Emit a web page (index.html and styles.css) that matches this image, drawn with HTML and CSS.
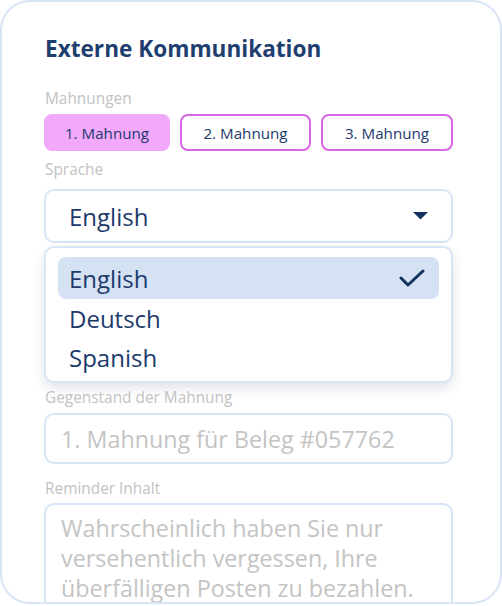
FILE: index.html
```html
<!DOCTYPE html>
<html lang="de">
<head>
<meta charset="utf-8">
<link rel="stylesheet" href="styles.css">
</head>
<body>
<div class="card">
  <h2 class="title">Externe Kommunikation</h2>
  <div class="label label-first">Mahnungen</div>
  <div class="tabs">
    <button class="tab tab-active">1. Mahnung</button>
    <button class="tab">2. Mahnung</button>
    <button class="tab">3. Mahnung</button>
  </div>
  <div class="label label-sprache">Sprache</div>
  <div class="select">
    <span class="select-value">English</span>
    <svg class="caret" width="15" height="8" viewBox="0 0 15 8"><path d="M0 0 H15 L7.5 7.5 Z" fill="#15325f"/></svg>
  </div>
  <div class="menu">
    <div class="option option-selected">
      <span>English</span>
      <svg class="check" width="26" height="20" viewBox="0 0 26 20"><path d="M2 10 L9 17 L24 3" fill="none" stroke="#15325f" stroke-width="3" stroke-linecap="round" stroke-linejoin="round"/></svg>
    </div>
    <div class="option"><span>Deutsch</span></div>
    <div class="option"><span>Spanish</span></div>
  </div>
  <div class="label label-subject">Gegenstand der Mahnung</div>
  <div class="input">1. Mahnung für Beleg #057762</div>
  <div class="label label-body">Reminder Inhalt</div>
  <div class="textarea">Wahrscheinlich haben Sie nur versehentlich vergessen, Ihre überfälligen Posten zu bezahlen.</div>
</div>
</body>
</html>
```
FILE: styles.css
```css
html, body {
  margin: 0;
  padding: 0;
  background: #ffffff;
}
body {
  font-family: "Open Sans", "Noto Sans", sans-serif;
  color: #1c3a6b;
}
.card {
  box-sizing: border-box;
  width: 502px;
  height: 604px;
  border: 2px solid #d8e5f6;
  border-radius: 30px;
  overflow: hidden;
  padding: 30px 47px 0 42px;
  background: #fff;
}
.title {
  margin: 0 0 0 1px;
  font-size: 22.6px;
  line-height: 34px;
  font-weight: 700;
  color: #1f3e70;
}
.label {
  font-size: 15.4px;
  line-height: 20px;
  color: #c2c2c2;
  margin-left: 1px;
}
.label-first {
  margin-top: 23px;
  margin-bottom: 5px;
}
.label-sprache {
  margin-top: 9px;
  margin-bottom: 9px;
}
.label-subject {
  margin-top: 5px;
  margin-bottom: 5px;
}
.label-body {
  margin-top: 15px;
  margin-bottom: 4px;
}
.tabs {
  display: grid;
  grid-template-columns: 126px 131px 1fr;
  gap: 10px;
}
.tab {
  box-sizing: border-box;
  height: 37px;
  border: 2px solid #d765e4;
  border-radius: 8px;
  background: #fff;
  font-family: inherit;
  font-size: 15.2px;
  color: #1c3a6b;
  padding: 0;
}
.tab-active {
  background: #f2a9fb;
  border-color: #f2a9fb;
}
.select {
  box-sizing: border-box;
  height: 54px;
  border: 2px solid #d8e5f6;
  border-radius: 10px;
  display: flex;
  align-items: center;
  justify-content: space-between;
  padding: 0 23px 0 23px;
}
.select-value {
  font-size: 24px;
}
.menu {
  box-sizing: border-box;
  margin-top: 3px;
  height: 137px;
  border: 2px solid #d8e5f6;
  border-radius: 10px;
  padding: 9px 12px 0 12px;
  box-shadow: 0 5px 12px rgba(30, 50, 90, 0.14);
  background: #fff;
}
.option {
  height: 39px;
  display: flex;
  align-items: center;
  justify-content: space-between;
  padding: 0 14px 0 11px;
  border-radius: 8px;
  font-size: 24px;
  color: #1c3a6b;
}
.option-selected {
  background: #d5e2f3;
  height: 42px;
}
.input {
  box-sizing: border-box;
  height: 51px;
  border: 2px solid #d8e5f6;
  border-radius: 10px;
  padding: 0 15px;
  display: flex;
  align-items: center;
  font-size: 23.3px;
  color: #c4c4c4;
}
.textarea {
  box-sizing: border-box;
  height: 140px;
  border: 2px solid #d8e5f6;
  border-radius: 10px;
  padding: 8px 15px;
  font-size: 23.3px;
  line-height: 30px;
  color: #c4c4c4;
}
```
